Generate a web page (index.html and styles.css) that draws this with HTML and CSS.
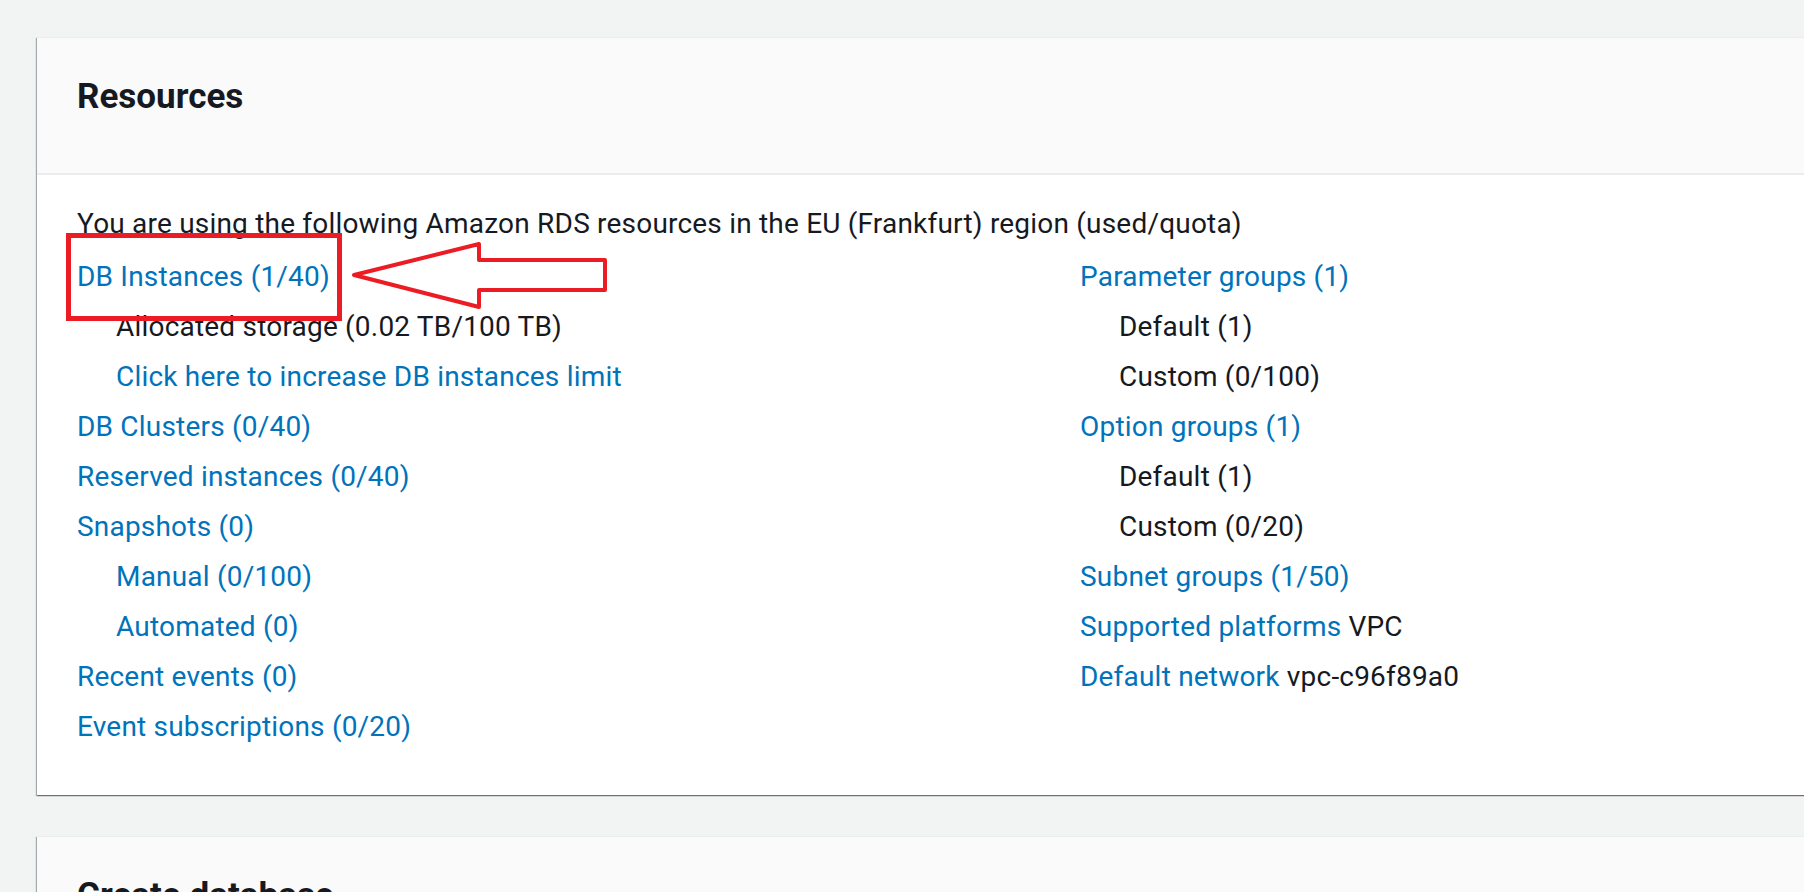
FILE: index.html
```html
<!DOCTYPE html>
<html lang="en">
<head>
<meta charset="utf-8">
<title>Amazon RDS - Resources</title>
<link rel="stylesheet" href="styles.css">
</head>
<body>
<main class="page">
  <section class="card">
    <header class="card-header"><h2>Resources</h2></header>
    <div class="card-body">
      <p class="intro">You are using the following Amazon RDS resources in the EU (Frankfurt) region (used/quota)</p>
      <div class="cols">
        <ul class="list">
          <li><a href="#">DB Instances (1/40)</a></li>
          <li class="sub">Allocated storage (0.02 TB/100 TB)</li>
          <li class="sub"><a href="#">Click here to increase DB instances limit</a></li>
          <li><a href="#">DB Clusters (0/40)</a></li>
          <li><a href="#">Reserved instances (0/40)</a></li>
          <li><a href="#">Snapshots (0)</a></li>
          <li class="sub"><a href="#">Manual (0/100)</a></li>
          <li class="sub"><a href="#">Automated (0)</a></li>
          <li><a href="#">Recent events (0)</a></li>
          <li><a href="#">Event subscriptions (0/20)</a></li>
        </ul>
        <ul class="list">
          <li><a href="#">Parameter groups (1)</a></li>
          <li class="sub">Default (1)</li>
          <li class="sub">Custom (0/100)</li>
          <li><a href="#">Option groups (1)</a></li>
          <li class="sub">Default (1)</li>
          <li class="sub">Custom (0/20)</li>
          <li><a href="#">Subnet groups (1/50)</a></li>
          <li><a href="#">Supported platforms</a> VPC</li>
          <li><a href="#">Default network</a> vpc-c96f89a0</li>
        </ul>
      </div>
    </div>
  </section>
  <section class="card">
    <header class="card-header"><h2>Create database</h2></header>
  </section>
</main>
<svg class="annot" width="1804" height="892" viewBox="0 0 1804 892" aria-hidden="true">
  <rect x="68.5" y="235.5" width="271" height="83" fill="none" stroke="#ec1c24" stroke-width="5"/>
  <polygon points="354,275 479,244 479,260 605,260 605,290 479,290 479,307" fill="none" stroke="#ec1c24" stroke-width="4" stroke-linejoin="round"/>
</svg>
</body>
</html>
```
FILE: styles.css
```css
html, body {
  margin: 0;
  padding: 0;
  background: #f2f3f3;
  overflow: hidden;
}
body {
  width: 1804px;
  height: 892px;
  position: relative;
  font-family: Roboto, "Liberation Sans", sans-serif;
  color: #16191f;
}
.page {
  padding: 37px 0 0 37px;
  display: flex;
  flex-direction: column;
  gap: 41px;
}
.card {
  width: 1800px;
  background: #ffffff;
  border-top: 1px solid #eaeded;
  box-shadow: 0 1px 1px 0 rgba(0, 28, 36, 0.3), 1px 1px 1px 0 rgba(0, 28, 36, 0.15), -1px 1px 1px 0 rgba(0, 28, 36, 0.3);
}
.card-header {
  background: #fafafa;
  border-bottom: 2px solid #eaeded;
  padding: 38px 40px 55px;
}
.card-header h2 {
  margin: 0;
  font-size: 35px;
  line-height: 42px;
  font-weight: 700;
  color: #16191f;
}
.card-body {
  padding: 24px 40px 43px;
  font-size: 28px;
  line-height: 50px;
  letter-spacing: 0.2px;
}
.intro {
  margin: 0 0 3px;
}
.cols {
  display: grid;
  grid-template-columns: 1003px 1fr;
}
.list {
  list-style: none;
  margin: 0;
  padding: 0;
}
.list .sub {
  padding-left: 39px;
}
a {
  color: #0073bb;
  text-decoration: none;
}
.annot {
  position: absolute;
  left: 0;
  top: 0;
  pointer-events: none;
}
```
